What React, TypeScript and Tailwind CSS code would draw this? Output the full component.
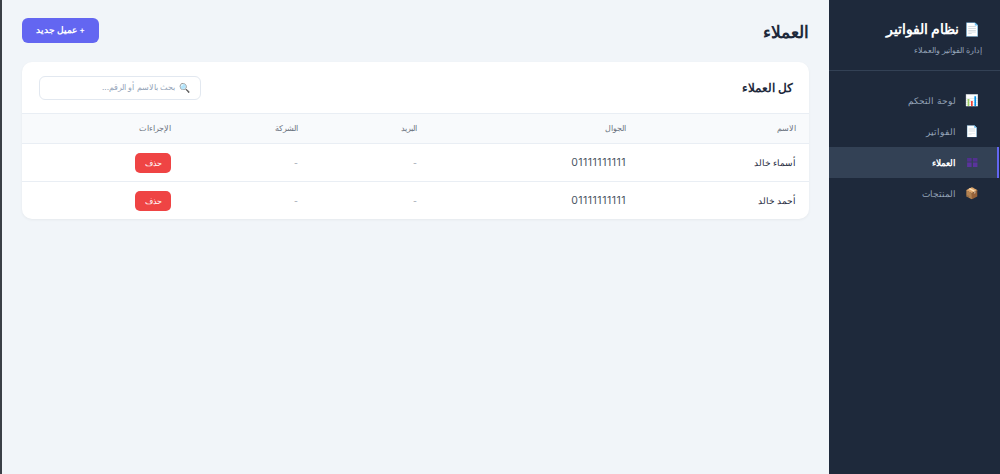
function PeopleIcon() {
  return (
    <svg viewBox="0 0 12 10" className="w-[11px] h-[9px]">
      <rect x="0" y="0" width="5" height="4" fill="#52308f" />
      <rect x="6.5" y="0" width="5" height="4" fill="#52308f" />
      <rect x="0" y="5" width="5" height="5" fill="#5a349c" />
      <rect x="6.5" y="5" width="5" height="5" fill="#5a349c" />
    </svg>
  );
}

const navItems = [
  { label: "لوحة التحكم", icon: "📊" },
  { label: "الفواتير", icon: "📄" },
  { label: "العملاء", icon: <PeopleIcon />, active: true },
  { label: "المنتجات", icon: "📦" },
];

const customers = [
  { name: "أسماء خالد", phone: "01111111111" },
  { name: "أحمد خالد", phone: "01111111111" },
];

export default function App() {
  return (
    <div
      dir="rtl"
      className="flex h-[474px] w-[1000px] overflow-hidden bg-[#f1f5f9] text-[#1e293b] font-['Inter',sans-serif]"
    >
      {/* Sidebar */}
      <aside className="w-[171px] shrink-0 bg-[#1e293b]">
        <div className="h-[71px] border-b border-[#334155] pr-[18px] pt-[19px]">
          <div className="flex items-center gap-[5px] pr-[2px] text-[14px] leading-[20px] font-bold text-white">
            <span className="text-[13px]">📄</span>
            <span>نظام الفواتير</span>
          </div>
          <p className="mt-[4px] text-[8px] leading-[14px] text-[#94a3b8]">إدارة الفواتير والعملاء</p>
        </div>
        <nav className="pt-[14px] pr-[1px]">
          {navItems.map((item) => (
            <div
              key={item.label}
              className={
                item.active
                  ? "flex h-[31px] items-center gap-[9px] border-r-[2px] border-[#6366f1] bg-[#334155] pr-[18px] text-[9.2px] font-semibold text-white"
                  : "flex h-[31px] items-center gap-[9px] border-r-[2px] border-transparent pr-[18px] text-[9.2px] text-[#94a3b8]"
              }
            >
              <span className="flex w-[14px] justify-center text-[11px]">{item.icon}</span>
              <span>{item.label}</span>
            </div>
          ))}
        </nav>
      </aside>

      {/* Main */}
      <main className="min-w-0 flex-1 pr-[20px] pl-[20px] pt-[18px]">
        <div className="flex h-[25px] items-center justify-between">
          <h1 className="pt-[4px] text-[17px] font-bold text-[#1e293b]">العملاء</h1>
          <button className="h-[25px] w-[77px] rounded-[6px] bg-[#6366f1] text-[8.5px] font-semibold text-white">
            + عميل جديد
          </button>
        </div>

        <section className="mt-[19px] overflow-hidden rounded-[10px] bg-white shadow-[0_1px_3px_rgba(0,0,0,0.05)]">
          <div className="flex h-[52px] items-center justify-between border-b border-[#e9eef4] pr-[16px] pl-[17px]">
            <h2 className="pt-[2px] text-[11.7px] font-bold text-[#1e293b]">كل العملاء</h2>
            <div className="flex h-[24px] w-[162px] items-center gap-[4px] rounded-[6px] border border-[#e2e8f0] pr-[10px] text-[8.2px] text-[#94a3b8]">
              <span className="text-[9px]">🔍</span>
              <span>بحث بالاسم أو الرقم...</span>
            </div>
          </div>
          <table className="w-full table-fixed border-collapse text-right">
            <thead>
              <tr className="h-[29px] bg-[#f8fafc] text-[8px] text-[#6b7280]">
                <th className="w-[183px] pr-[13px] font-normal">الاسم</th>
                <th className="w-[209px] font-normal">الجوال</th>
                <th className="w-[119px] font-normal">البريد</th>
                <th className="w-[127px] font-normal">الشركة</th>
                <th className="font-normal">الإجراءات</th>
              </tr>
            </thead>
            <tbody>
              {customers.map((c) => (
                <tr key={c.name} className="h-[38px] border-t border-[#e9eef4] text-[8.5px]">
                  <td className="pt-[2px] pr-[13px] text-[#1e293b]">{c.name}</td>
                  <td className="pt-[2px] text-[10.5px] tracking-[0.5px] text-[#4b5563]">
                    <span dir="ltr">{c.phone}</span>
                  </td>
                  <td className="pt-[2px] text-[#9ca3af]">-</td>
                  <td className="pt-[2px] text-[#9ca3af]">-</td>
                  <td className="pt-px">
                    <button className="h-[20px] w-[36px] rounded-[5px] bg-[#ef4444] text-[8px] text-white">
                      حذف
                    </button>
                  </td>
                </tr>
              ))}
            </tbody>
          </table>
        </section>
      </main>

      {/* window edge */}
      <div className="w-[2px] shrink-0 bg-[#3a3f47]" />
    </div>
  );
}
